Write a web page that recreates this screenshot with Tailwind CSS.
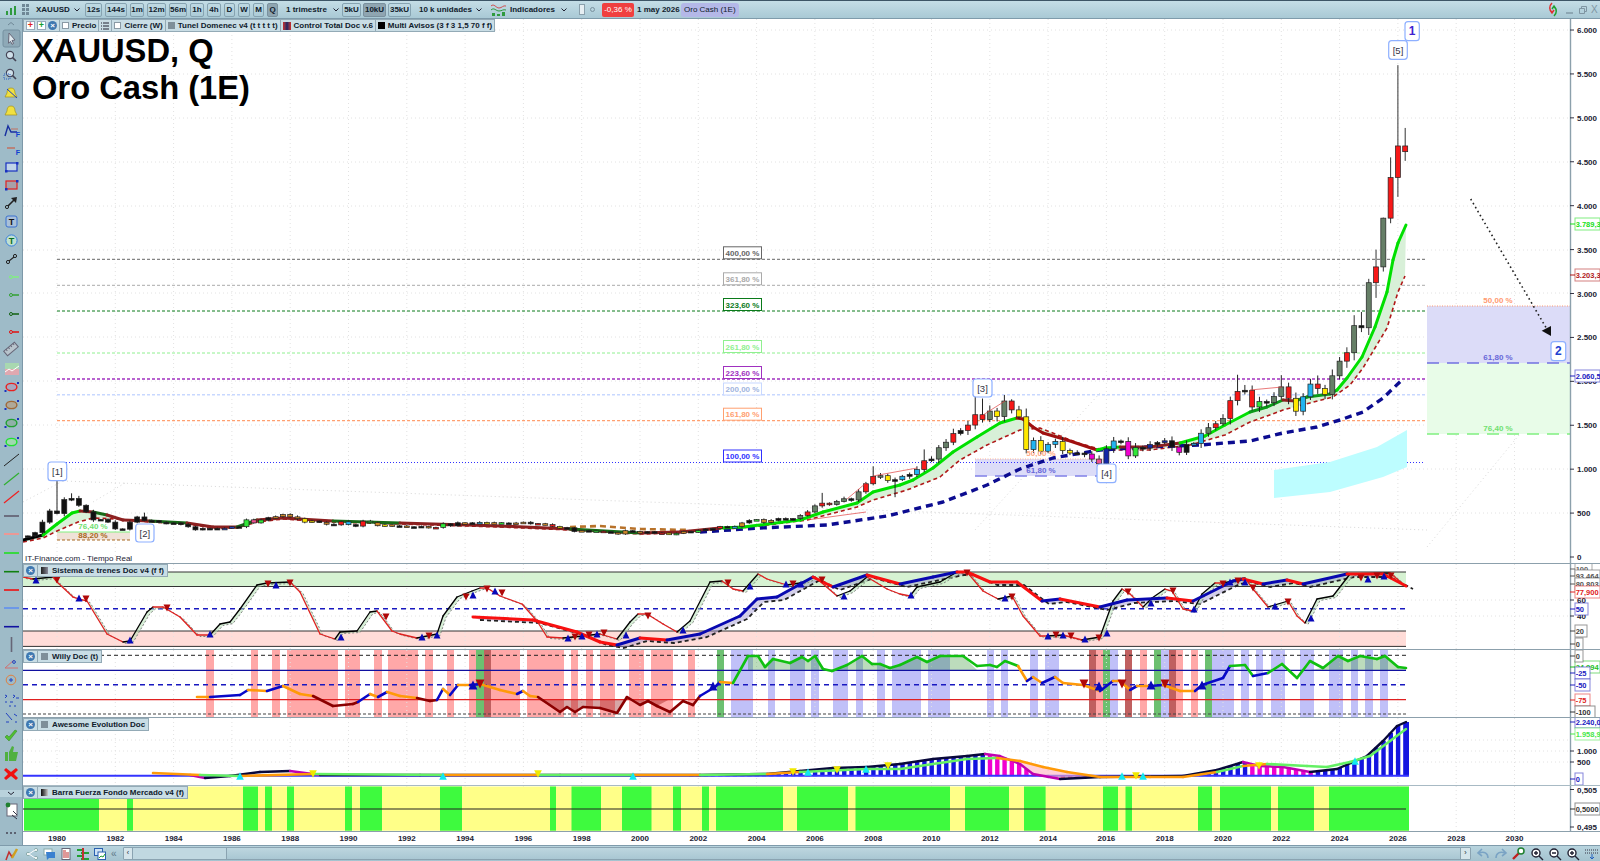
<!doctype html>
<html lang="es">
<head>
<meta charset="utf-8">
<title>XAUUSD, Q</title>
<script src="https://cdn.jsdelivr.net/npm/@tailwindcss/browser@4"></script>
</head>
<body class="bg-white">
<div class="w-[1600px] h-[861px] overflow-hidden flex flex-col font-['Liberation_Sans',Arial,sans-serif] text-[#10202c] bg-white">

  <!-- top toolbar -->
  <header class="h-[19px] shrink-0 flex items-center border-t border-b border-t-[#3d5566] border-b-[#7f9bab] bg-gradient-to-b from-[#c4dde6] to-[#a9c9d5] text-[8px] font-bold whitespace-nowrap">
    <svg class="ml-[5px] w-[13px] h-[12px]" viewBox="0 0 13 12"><path d="M1 11V7h2v4zM5 11V4h2v7zM9 11V2h2v9z" fill="#2f9a3f"/></svg>
    <svg class="ml-[4px] w-[7px] h-[13px]" viewBox="0 0 7 13"><path d="M0 1h3v3H0zM4 1h3v3H4zM0 5h3v3H0zM4 5h3v3H4zM0 9h3v3H0zM4 9h3v3H4z" fill="#6f8796"/></svg>
    <span class="ml-[7px] w-[34px]">XAUUSD</span>
    <span class="w-[15px] flex pl-[4px]"><svg class="w-[6px] h-[4px]" viewBox="0 0 6 4"><path d="M.5.5L3 3 5.500.5" fill="none" stroke="#223"/></svg></span>
    <div class="flex gap-[3px]">
      <span class="w-[17px] h-[14px] flex items-center justify-center border border-[#86a3b1] rounded-[2px]">12s</span>
      <span class="w-[22px] h-[14px] flex items-center justify-center border border-[#86a3b1] rounded-[2px]">144s</span>
      <span class="w-[14px] h-[14px] flex items-center justify-center border border-[#86a3b1] rounded-[2px]">1m</span>
      <span class="w-[19px] h-[14px] flex items-center justify-center border border-[#86a3b1] rounded-[2px]">12m</span>
      <span class="w-[18px] h-[14px] flex items-center justify-center border border-[#86a3b1] rounded-[2px]">56m</span>
      <span class="w-[14px] h-[14px] flex items-center justify-center border border-[#86a3b1] rounded-[2px]">1h</span>
      <span class="w-[14px] h-[14px] flex items-center justify-center border border-[#86a3b1] rounded-[2px]">4h</span>
      <span class="w-[11px] h-[14px] flex items-center justify-center border border-[#86a3b1] rounded-[2px]">D</span>
      <span class="w-[12px] h-[14px] flex items-center justify-center border border-[#86a3b1] rounded-[2px]">W</span>
      <span class="w-[11px] h-[14px] flex items-center justify-center border border-[#86a3b1] rounded-[2px]">M</span>
      <span class="w-[11px] h-[14px] flex items-center justify-center border border-[#7a919e] rounded-[2px] bg-[#8fa5b1]">Q</span>
    </div>
    <span class="ml-[8px] w-[47px]">1 trimestre</span>
    <span class="w-[9px] flex"><svg class="w-[6px] h-[4px]" viewBox="0 0 6 4"><path d="M.5.5L3 3 5.500.5" fill="none" stroke="#223"/></svg></span>
    <div class="flex gap-[2px]">
      <span class="w-[19px] h-[14px] flex items-center justify-center border border-[#86a3b1] rounded-[2px]">5kU</span>
      <span class="w-[23px] h-[14px] flex items-center justify-center border border-[#7a919e] rounded-[2px] bg-[#8fa5b1]">10kU</span>
      <span class="w-[23px] h-[14px] flex items-center justify-center border border-[#86a3b1] rounded-[2px]">35kU</span>
    </div>
    <span class="ml-[8px] w-[54px]">10 k unidades</span>
    <span class="w-[17px] flex pl-[3px]"><svg class="w-[6px] h-[4px]" viewBox="0 0 6 4"><path d="M.5.5L3 3 5.500.5" fill="none" stroke="#223"/></svg></span>
    <svg class="w-[17px] h-[15px]" viewBox="0 0 17 15"><path d="M1 4c3-3 5 2 8 2s4-3 7-2" fill="none" stroke="#d05050"/><path d="M1 8c3-3 5 1 8 1s4-2 7-1" fill="none" stroke="#2f9a3f"/><path d="M2 14v-3h3v3zM7 14v-2h3v2zM12 14v-4h3v4z" fill="#2f9a3f"/></svg>
    <span class="ml-[3px] w-[48px]">Indicadores</span>
    <span class="w-[11px] flex pl-[3px]"><svg class="w-[6px] h-[4px]" viewBox="0 0 6 4"><path d="M.5.5L3 3 5.500.5" fill="none" stroke="#223"/></svg></span>
    <span class="ml-[10px] w-[6px] h-[11px] bg-[#e6eef2] border border-[#8aa0ac]"></span>
    <span class="ml-[5px] w-[5px] h-[5px] rounded-full border border-[#7a919e]"></span>
    <span class="ml-[7px] w-[32px] h-[14px] flex items-center justify-center bg-[#f04040] text-white rounded-[2px] font-normal">-0,36 %</span>
    <span class="ml-[3px] w-[43px]">1 may 2026</span>
    <span class="ml-[1px] px-[3px] h-[14px] flex items-center bg-[#b4b8e8] rounded-[3px] font-normal">Oro Cash (1E)</span>
    <span class="flex-1"></span>
    <svg class="w-[12px] h-[15px]" viewBox="0 0 12 15"><path d="M5 1C2 4 2 8 5 10M3 8l2 3 2-3" fill="none" stroke="#e03030" stroke-width="1.5"/><path d="M7 14c3-3 3-7 0-9M5 7l2-3 2 3" fill="none" stroke="#20a030" stroke-width="1.5"/></svg>
    <svg class="ml-[7px] w-[8px] h-[8px]" viewBox="0 0 8 8"><path d="M0 7h7" stroke="#7f95a2" stroke-width="1.4"/></svg>
    <svg class="ml-[5px] w-[8px] h-[8px]" viewBox="0 0 8 8"><path d="M.5 2.500h5v5h-5zM2.500 2.500V.5h5v5h-2" fill="none" stroke="#7f95a2"/></svg>
    <span class="ml-[4px] w-[9px] text-[#7f95a2] text-[10px] font-normal leading-none">X</span>
  </header>

  <!-- body -->
  <div class="flex-1 flex min-h-0">
    <aside class="w-[23px] shrink-0 bg-[#9ebbc8] border-r border-[#7d98a8]">
      <svg class="w-[22px] h-[826px] block" viewBox="0 19 22 826" id="tools"></svg>
    </aside>

    <main class="flex-1 flex flex-col min-w-0">
      <section class="relative h-[545px] shrink-0 border-b border-[#8ca0ac]">
        <svg class="block w-[1577px] h-[544px]" viewBox="23 19 1577 544" id="mainChart"></svg>
        <div class="absolute left-0 top-0 flex items-center h-[13px] bg-[#c9dde5] border border-[#93aab6] text-[8px] font-bold whitespace-nowrap">
          <span class="flex items-center gap-[2px] px-[2px]">
            <span class="w-[9px] h-[9px] bg-white border border-[#99aabb] flex items-center justify-center text-[#e02020] text-[9px] leading-none">+</span>
            <span class="w-[9px] h-[9px] bg-white border border-[#99aabb] flex items-center justify-center text-[#18a030] text-[9px] leading-none">+</span>
            <span class="w-[9px] h-[9px] rounded-full bg-[#3f78b0] flex items-center justify-center text-white text-[8px] leading-none">×</span>
          </span>
          <span class="flex items-center h-full border-l border-[#93aab6] px-[2px] gap-[3px]"><i class="w-[7px] h-[7px] border border-[#8a9aa5] bg-white"></i>Precio</span>
          <span class="flex items-center h-full border-l border-[#93aab6] px-[2px]"><svg class="w-[8px] h-[8px]" viewBox="0 0 8 8"><path d="M0 1h1M2 1h6M0 4h1M2 4h6M0 7h1M2 7h6" stroke="#223" fill="none"/></svg></span>
          <span class="flex items-center h-full border-l border-[#93aab6] px-[2px] gap-[3px]"><i class="w-[7px] h-[7px] border border-[#8a9aa5] bg-white"></i>Cierre (W)</span>
          <span class="flex items-center h-full border-l border-[#93aab6] px-[2px] gap-[3px]"><i class="w-[7px] h-[7px] bg-[#7f8f99]"></i>Tunel Domenec v4 (t t t t t)</span>
          <span class="flex items-center h-full border-l border-[#93aab6] px-[2px] gap-[3px]"><i class="w-[8px] h-[8px] bg-gradient-to-r from-[#d02020] via-[#202060] to-[#d02020]"></i>Control Total Doc v.6</span>
          <span class="flex items-center h-full border-l border-[#93aab6] px-[2px] gap-[3px]"><i class="w-[7px] h-[7px] bg-black"></i>Multi Avisos (3 f 3 1,5 70 f f)</span>
        </div>
        <h1 class="absolute left-[9px] top-[13px] text-[32.7px] leading-[37px] font-bold text-black">XAUUSD, Q<br>Oro Cash (1E)</h1>
        <div class="absolute left-[2px] bottom-0 text-[8px] leading-[9px] text-[#223]">IT-Finance.com - Tiempo Real</div>
      </section>

      <section class="relative h-[86px] shrink-0 border-b border-[#8ca0ac]">
        <svg class="block w-[1577px] h-[85px]" viewBox="23 565 1577 85" id="pTrenes"></svg>
        <div class="absolute left-0 top-0 h-[13px] flex items-center bg-[#c9dde5] border border-[#93aab6] text-[8px] font-bold whitespace-nowrap">
          <span class="w-[9px] h-[9px] mx-[2px] rounded-full bg-[#3f78b0] flex items-center justify-center text-white text-[8px] leading-none">×</span>
          <span class="flex items-center h-full border-l border-[#93aab6] px-[3px] gap-[4px]"><i class="w-[7px] h-[7px] bg-gradient-to-r from-[#222222] to-[#888899]"></i>Sistema de trenes Doc v4 (f f)</span>
        </div>
      </section>

      <section class="relative h-[68px] shrink-0 border-b border-[#8ca0ac]">
        <svg class="block w-[1577px] h-[67px]" viewBox="23 651 1577 67" id="pWilly"></svg>
        <div class="absolute left-0 top-0 h-[13px] flex items-center bg-[#c9dde5] border border-[#93aab6] text-[8px] font-bold whitespace-nowrap">
          <span class="w-[9px] h-[9px] mx-[2px] rounded-full bg-[#3f78b0] flex items-center justify-center text-white text-[8px] leading-none">×</span>
          <span class="flex items-center h-full border-l border-[#93aab6] px-[3px] gap-[4px]"><i class="w-[7px] h-[7px] bg-[#7f8f99]"></i>Willy Doc (t)</span>
        </div>
      </section>

      <section class="relative h-[68px] shrink-0 border-b border-[#a8bac4]">
        <svg class="block w-[1577px] h-[67px]" viewBox="23 719 1577 67" id="pAwesome"></svg>
        <div class="absolute left-0 top-0 h-[13px] flex items-center bg-[#c9dde5] border border-[#93aab6] text-[8px] font-bold whitespace-nowrap">
          <span class="w-[9px] h-[9px] mx-[2px] rounded-full bg-[#3f78b0] flex items-center justify-center text-white text-[8px] leading-none">×</span>
          <span class="flex items-center h-full border-l border-[#93aab6] px-[3px] gap-[4px]"><i class="w-[7px] h-[7px] bg-[#7f8f99]"></i>Awesome Evolution Doc</span>
        </div>
      </section>

      <section class="relative h-[46px] shrink-0 border-b border-[#8ca0ac]">
        <svg class="block w-[1577px] h-[45px]" viewBox="23 787 1577 45" id="pBarra"></svg>
        <div class="absolute left-0 top-0 h-[13px] flex items-center bg-[#c9dde5] border border-[#93aab6] text-[8px] font-bold whitespace-nowrap">
          <span class="w-[9px] h-[9px] mx-[2px] rounded-full bg-[#3f78b0] flex items-center justify-center text-white text-[8px] leading-none">×</span>
          <span class="flex items-center h-full border-l border-[#93aab6] px-[3px] gap-[4px]"><i class="w-[7px] h-[7px] bg-gradient-to-r from-[#111111] to-[#cccccc]"></i>Barra Fuerza Fondo Mercado v4 (f)</span>
        </div>
      </section>

      <svg class="block w-[1577px] h-[12px] shrink-0" viewBox="23 833 1577 12" id="years"></svg>
    </main>
  </div>

  <!-- bottom toolbar -->
  <footer class="h-[16px] shrink-0 flex items-center border-t border-[#7f9bab] bg-gradient-to-b from-[#b8d4de] to-[#a4c3cf]">
    <svg class="ml-[5px] w-[14px] h-[14px]" viewBox="0 0 14 14"><path d="M1 13l3-8 3 5 2-3" fill="none" stroke="#c03030" stroke-width="1.5"/><path d="M7 11L12 2" stroke="#d0a020" stroke-width="2.500"/></svg>
    <div class="ml-[7px] flex items-center gap-[5px]">
      <svg class="w-[12px] h-[12px]" viewBox="0 0 12 12"><g fill="#fff" stroke="#88aaaa"><circle cx="2" cy="6" r="1.6"/><circle cx="10" cy="2" r="1.6"/><circle cx="10" cy="10" r="1.6"/></g><path d="M3 6l6-4M3 6l6 4" stroke="#fff"/></svg>
      <svg class="w-[12px] h-[12px]" viewBox="0 0 12 12"><rect x="1" y="1" width="8" height="6" fill="#fff" stroke="#88aaaa"/><path d="M3 4h9v6H6l-2 2z" fill="#3a80d0"/></svg>
      <svg class="w-[12px] h-[12px]" viewBox="0 0 12 12"><rect x="2" y="0.5" width="8" height="11" fill="#fff" stroke="#666677"/><path d="M3 3h3M3 5h6M3 7h6M3 9h6" stroke="#c03030"/></svg>
      <svg class="w-[12px] h-[12px]" viewBox="0 0 12 12"><path d="M0 2h6M4 5h8M0 8h6M4 11h8" stroke="#20a030" stroke-width="2"/><path d="M6 0v12" stroke="#c03030" stroke-width="2"/></svg>
      <svg class="w-[12px] h-[12px]" viewBox="0 0 12 12"><rect x="0.5" y="0.5" width="8" height="7" fill="#cfe3f5" stroke="#2a60b0"/><rect x="4" y="4" width="7.5" height="7.5" fill="#fff" stroke="#2a60b0"/><path d="M5 10l2-2 2 1 2-3" stroke="#20a030" fill="none"/></svg>
    </div>
    <span class="ml-[5px] w-[10px] text-[10px] text-[#5f7887] leading-none">«</span>
    <div class="ml-[2px] w-[1351px] h-[13px] flex border border-[#8aa3b1] rounded-[1px] bg-[#b4d0db]">
      <span class="w-[9px] flex items-center justify-center text-[7px] bg-[#d5e5eb] border-r border-[#8aa3b1]">‹</span>
      <span class="w-[94px] bg-[#c0d8e1] border-r border-[#8aa3b1]"></span>
      <span class="flex-1 bg-gradient-to-b from-[#bdd6df] to-[#a9c7d3]"></span>
      <span class="w-[10px] flex items-center justify-center text-[7px] bg-[#d5e5eb] border-l border-[#8aa3b1]">›</span>
    </div>
    <div class="ml-[5px] flex items-center gap-[4px]">
      <svg class="w-[14px] h-[13px]" viewBox="0 0 14 13"><path d="M12 11c0-5-4-7-9-5M6 2L2 6l4 3" fill="none" stroke="#7aa3c4" stroke-width="1.6"/></svg>
      <svg class="w-[14px] h-[13px]" viewBox="0 0 14 13"><path d="M2 11c0-5 4-7 9-5M8 2l4 4-4 3" fill="none" stroke="#7aa3c4" stroke-width="1.6"/></svg>
      <svg class="w-[14px] h-[14px]" viewBox="0 0 14 14"><path d="M1 12l6-6" stroke="#c02020" stroke-width="2.400"/><circle cx="9" cy="4" r="3" fill="#fff" stroke="#208030" stroke-width="1.5"/></svg>
      <svg class="w-[14px] h-[14px]" viewBox="0 0 14 14"><circle cx="6" cy="6" r="4" fill="#fff" stroke="#222233" stroke-width="1.4"/><path d="M9 9l4 4M6 4v4M4 6h4" stroke="#222233" stroke-width="1.4"/></svg>
      <svg class="w-[14px] h-[14px]" viewBox="0 0 14 14"><circle cx="6" cy="6" r="4" fill="#fff" stroke="#222233" stroke-width="1.4"/><path d="M9 9l4 4M4 6h4" stroke="#222233" stroke-width="1.4"/></svg>
      <svg class="w-[14px] h-[14px]" viewBox="0 0 14 14"><circle cx="6" cy="6" r="4" fill="#fff" stroke="#222233" stroke-width="1.4"/><path d="M9 9l4 4M6 4v4M4 6h4" stroke="#222233" stroke-width="1.4"/></svg>
      <svg class="w-[16px] h-[13px]" viewBox="0 0 16 13"><path d="M1 3h14M1 6h14" stroke="#333344" stroke-dasharray="1 1" fill="none"/><path d="M8 7v5M6 10l2 2 2-2" stroke="#2060c0" fill="none"/></svg>
    </div>
  </footer>
</div>

<script>
(function(){
var FONT='font-family="Liberation Sans,Arial,sans-serif"';
function X(y){return 57+(y-1980)*29.15}
function Y(p){return 557-p*0.08783}
function pts(a){return a.map(function(p){return p[0]+','+p[1]}).join(' ')}
function line(a,c,w,extra){return '<polyline points="'+pts(a)+'" fill="none" stroke="'+c+'" stroke-width="'+w+'" stroke-linejoin="round" '+(extra||'')+'/>'}
function seg(x1,y1,x2,y2,c,w,extra){return '<line x1="'+x1+'" y1="'+y1+'" x2="'+x2+'" y2="'+y2+'" stroke="'+c+'" stroke-width="'+(w||1)+'" '+(extra||'')+'/>'}
function rect(x,y,w,h,c,extra){return '<rect x="'+x+'" y="'+y+'" width="'+w+'" height="'+h+'" fill="'+c+'" '+(extra||'')+'/>'}
function text(x,y,s,c,size,weight,anchor){return '<text x="'+x+'" y="'+y+'" fill="'+c+'" font-size="'+size+'" '+FONT+' font-weight="'+(weight||'normal')+'" text-anchor="'+(anchor||'start')+'">'+s+'</text>'}
function tri(x,y,c,up,s){s=s||4;return up?'<polygon points="'+(x-s)+','+(y+s)+' '+(x+s)+','+(y+s)+' '+x+','+(y-s)+'" fill="'+c+'"/>':'<polygon points="'+(x-s)+','+(y-s)+' '+(x+s)+','+(y-s)+' '+x+','+(y+s)+'" fill="'+c+'"/>'}
function grid(top,bottom){var s='';for(var y=1980;y<=2030;y+=2)s+=seg(X(y),top,X(y),bottom,'#e2e2e2',1,'stroke-dasharray="1 3"');return s}
function hgrid(ys){return ys.map(function(y){return seg(23,y,1570,y,'#e2e2e2',1,'stroke-dasharray="1 3"')}).join('')}
function axis(top,bottom){return rect(1570,top,30,bottom-top,'#fff')+seg(1570.5,top,1570.5,bottom,'#8ca0ac',1.4)}
function tick(y,s,c){return seg(1570,y,1574,y,c||'#334',1)+text(1577,y+3,s,c||'#223',8,'bold')}
function box(y,s,c,w){w=w||25;return seg(1570,y,1575,y,c,1)+rect(1575,y-6,w,12,'#fff','stroke="'+c+'" stroke-opacity=".55"')+text(1575.7,y+3,s,c,7.5,'bold')}
function lab(x0,x1,y0,y1,s,c,col){return rect(x0,y0,x1-x0,y1-y0,'#fff','rx="3" stroke="#8eb0ff" stroke-width="1.2"')+text((x0+x1)/2,(y0+y1)/2+3.5,s,col||'#334',col?12:9.5,col?'bold':'normal','middle')}

/* ---------- candles ---------- */
var closes=[240,277,397,524,494,653,666,589,513,422,428,397,320,317,397,456,415,413,395,381,388,373,344,309,326,317,326,327,344,345,423,388,421,447,459,484,457,436,397,410,395,373,366,401,368,352,408,391,356,367,355,353,344,343,349,332,337,378,355,390,389,385,394,383,391,387,384,387,396,382,379,369,348,334,332,290,301,296,294,288,279,262,299,290,276,288,273,272,258,270,292,279,302,318,323,347,336,346,388,416,426,394,416,438,428,437,473,513,582,613,599,632,663,650,742,834,917,926,871,880,919,939,995,1096,1115,1244,1307,1405,1439,1502,1620,1564,1662,1598,1776,1675,1596,1224,1326,1204,1283,1315,1211,1184,1183,1172,1115,1061,1232,1321,1315,1151,1247,1241,1280,1302,1323,1252,1192,1281,1292,1409,1472,1517,1577,1780,1886,1898,1708,1770,1757,1828,1937,1807,1660,1824,1969,1919,1849,2063,2230,2326,2634,2610,3123,3303,3858,4320,4680,4615];
var hi={'1980.00':875,'1980.50':725,'1983.00':505,'1981.00':600,'2006.25':730,'2008.00':1033,'2009.75':1225,'2011.50':1920,'2011.75':1804,'2012.75':1796,'2020.50':2075,'2022.00':2070,'2023.25':2067,'2023.75':2135,'2024.75':2790,'2025.00':3167,'2025.25':3500,'2025.50':3864,'2025.75':4550,'2026.00':5600,'2026.25':4885};
var lo={'2008.75':681,'2026.00':4100,'2026.25':4510,'2025.75':3800,'2025.25':2950,'2025.50':3250,'2013.25':1180,'2015.75':1046};
var cols=['kkkk','kkkk','kkkk','kkkk','kkkk','kkkk','kkkb','bklp','lkoo','ooyy','kokr','ckrl','oyok','okko','rlkk','okcy','olko','okro','rykk','oklr','kook','okkr','ylok','lkkr','kcok','look','kkgr','grrg','gkgr','rgyk','ckcr','kggr','krrr','gygr','yycy','ccyy','kkmp','nckm','lknk','nkmk','ccgr','grrk','rlkg','gryc','cryg','grgk','grgr','rr'].join('');
var CM={k:'#111',g:'#667f67',r:'#f81818',y:'#ffe800',c:'#22b4f0',m:'#f000d0',n:'#1428a8',l:'#30e838',o:'#d08a28',b:'#2840c8',p:'#f05090'};
function candles(){var s='';var prev=closes[0]*0.95;
 for(var i=0;i<closes.length;i++){var yr=1979+i*0.25,x=X(yr),o=prev,c=closes[i];if(i==closes.length-1){o=4680;c=4615}
  var top=Math.max(o,c),bot=Math.min(o,c),key=yr.toFixed(2);
  var w=Math.abs(o-c)*0.12+top*0.012*(1+((i*7)%5)*0.4);
  var h=hi[key]||top+w, l=lo[key]||bot-Math.abs(o-c)*0.1-bot*0.012*(1+((i*3)%4)*0.5);
  s+=seg(x,Y(h),x,Y(l),i>180?'#333':'#222',1);
  var by=Y(top),bh=Math.max(Y(bot)-by,1.6);
  s+=rect(x-2.5,by,5,bh,CM[cols[i]]||'#111','stroke="#222" stroke-width=".7"');
  prev=c}
 return s}

var ma=[[23,540],[43,535],[57,524],[72,513],[80,511],[93,512],[107,515],[123,520],[150,521],[187,523],[213,527],[237,527],[257,520],[283,518],[333,521],[400,523],[500,526],[570,529],[640,533],[680,532],[720,528],[743,527],[800,520],[823,512],[857,503],[873,492],[900,485],[913,480],[933,468],[953,452],[977,437],[1000,423],[1017,418],[1023,419],[1033,427],[1043,433],[1067,440],[1097,450],[1105,448],[1120,447],[1150,447],[1180,443],[1205,436],[1225,425],[1250,412],[1267,407],[1283,400],[1295,401],[1307,397],[1330,394],[1337,390],[1347,378],[1362,357],[1375,327],[1387,292],[1393,260],[1398,243],[1406,225]];
var rd=[[23,542],[43,538],[57,531],[78,522],[93,518],[117,519],[150,522],[187,524],[213,528],[237,528],[257,522],[283,519],[333,522],[400,524],[500,527],[570,530],[640,534],[680,533],[720,529],[743,528],[807,520],[857,507],[873,500],[907,490],[940,477],[960,460],[987,445],[1020,430],[1040,428],[1078,443],[1103,450],[1150,450],[1190,445],[1225,435],[1250,422],[1267,416],[1283,410],[1310,403],[1333,397],[1350,385],[1363,368],[1375,348],[1387,328],[1398,292],[1405,276]];
var navy=[[700,532],[760,528],[827,525],[887,516],[943,502],[987,485],[1020,469],[1053,458],[1100,450],[1147,447],[1200,445],[1250,441],[1283,433],[1317,427],[1340,420],[1363,412],[1383,398],[1402,380]];
function colored(a,w,fn){var s='';for(var i=1;i<a.length;i++){s+=seg(a[i-1][0],a[i-1][1],a[i][0],a[i][1],fn(a[i-1],a[i],i),w,'stroke-linecap="round"')}return s}

var m='';
m+=grid(19,563)+hgrid([30,74,118,162,206,250,293,337,381,425,469,513]);
m+=seg(23,502,63,481,'#d8d8d8',1,'stroke-dasharray="1 3"')+seg(63,481,1427,530,'#d8d8d8',1,'stroke-dasharray="1 3"')+seg(93,502,125,483,'#d8d8d8',1,'stroke-dasharray="1 3"')+seg(975,530,1100,393,'#d8d8d8',1,'stroke-dasharray="1 3"')+seg(1427,547,1570,373,'#d8d8d8',1,'stroke-dasharray="1 3"');
m+=rect(1427,306,143,57,'#dcdcf8')+rect(1427,363,143,71,'#e8fce8');
m+=seg(1427,306,1570,306,'#ff9a70',1,'stroke-dasharray="1 1.5"')+seg(1427,363,1570,363,'#7070e0',1.6,'stroke-dasharray="12 8"')+seg(1427,434,1570,434,'#80f080',1.4,'stroke-dasharray="12 8"');
m+=text(1498,303,'50,00 %','#ff9a70',8,'bold','middle')+text(1498,360,'61,80 %','#6868d8',8,'bold','middle')+text(1498,431,'76,40 %','#70e070',8,'bold','middle');
m+=rect(975,459,130,17,'#dcdcf8')+seg(975,459,1105,459,'#ffb090',1,'stroke-dasharray="1 1.5"')+seg(975,476,1105,476,'#8080e8',1.6,'stroke-dasharray="12 8"');
m+=rect(57,532,73,8,'#f0e2d8')+seg(57,532,130,532,'#80f080',1)+seg(57,540,130,540,'#a86820',1,'stroke-dasharray="3 2"');
[[259.3,'#666',1,'400,00 %','3 2'],[285.3,'#aaa',1,'361,80 %','3 2'],[311,'#0a7a1a',1,'323,60 %','3 2'],[353,'#90f090',1,'261,80 %','3 2'],[379,'#a030c0',1.5,'223,60 %','3 2'],[394.7,'#c8d8ff',1.5,'200,00 %','3 2'],[420.7,'#ffa070',1.2,'161,80 %','3 2'],[462.5,'#3030ff',1,'100,00 %','1 2']].forEach(function(f){
  m+=seg(57,f[0],1425,f[0],f[1],f[2],'stroke-dasharray="'+f[4]+'"');
  var ty=f[3]=='200,00 %'?383:f[0]-12.5;
  m+=rect(723.5,ty,38,12,'#fff','stroke="'+f[1]+'"')+text(742.5,ty+9,f[3],f[1]=='#c8d8ff'?'#a0b4e0':f[1],8,'bold','middle');
});
m+='<polygon points="1274,470 1330,462 1377,447 1407,430 1407,467 1383,477 1330,492 1274,498" fill="#bdfdff"/>';
m+='<polygon points="'+pts(ma.concat(rd.slice().reverse()))+'" fill="#d8f0d8"/>';
m+=line(rd,'#b01818',1.6,'stroke-dasharray="4 3"');
m+=line(navy,'#0c0c90',3.4,'stroke-dasharray="7 5"');
m+=line([[570,527],[600,526],[640,529],[690,530]],'#b8722a',2.6,'stroke-dasharray="6 4"');
m+=colored(ma,3,function(a,b,i){if(b[0]<45)return '#000';if(b[1]<a[1]-0.15&&(b[0]<130||b[0]>740)&&!(b[0]>1120&&b[0]<1205))return b[0]>1250&&b[0]<1340?'#0a9a18':'#00e000';if(b[0]>700&&b[0]<1130&&b[1]>a[1])return '#a01010';return (i%3==0)?'#186a18':'#8c2020'});
m+=candles();
m+=text(93,529,'76,40 %','#70e070',8,'bold','middle')+text(93,537.5,'88,20 %','#a86820',8,'bold','middle');
m+=text(1041,456,'50,00 %','#ffa880',8,'bold','middle')+text(1041,473,'61,80 %','#6868d8',8,'bold','middle');
m+=line([[807,520],[866,512]],'#e04040',.7)+line([[847,499],[866,483]],'#e04040',.7)+line([[873,476],[917,468]],'#e04040',.7)+line([[983,415],[1005,401]],'#e04040',.7)+line([[1250,390],[1282,387]],'#e04040',.7);
m+=seg(1470.7,199,1548,331,'#222',1.6,'stroke-dasharray="1.6 3"')+'<polygon points="1541.7,330.7 1551,326 1551,336" fill="#111"/>';
m+=lab(48,66.7,462,480.7,'[1]')+lab(135.7,154,524,542,'[2]')+lab(973,992,379,397,'[3]')+lab(1097,1116,464,482.7,'[4]')+lab(1388.7,1407.3,40.7,59.3,'[5]');
m+=lab(1405,1419.3,21.7,40.7,'1',0,'#4020d0')+lab(1551,1565.7,341.7,360.7,'2',0,'#2040d0');
m+=axis(19,564);
[6000,5500,5000,4500,4000,3500,3000,2500,2000,1500,1000].forEach(function(p){m+=tick(Y(p),String(p).replace(/(\d)(\d{3})$/,'$1.$2'))});
m+=tick(Y(500),'500')+tick(Y(0),'0');
m+=box(224,'3.789,3','#18e018')+box(275,'3.203,3','#b01818')+box(376,'2.060,5','#2020c0');
document.getElementById('mainChart').innerHTML=m;

/* ---------- Sistema de trenes ---------- */
var thin=[[23,578],[33,580],[53,578],[57,583],[73,598],[87,602],[107,635],[123,643],[130,642],[147,613],[153,608],[163,608],[180,618],[197,636],[210,636],[220,625],[230,623],[240,610],[257,586],[267,584],[290,583],[300,593],[320,635],[335,640],[340,633],[357,632],[370,613],[377,612],[392,632],[400,635],[417,639],[437,635],[443,617],[457,598],[472,592],[480,589],[487,589],[500,597],[522,605],[537,622],[547,638],[563,639],[573,638],[600,635],[617,640],[630,623],[638,615],[647,615],[663,625],[677,633],[690,622],[710,583],[722,582],[733,590],[743,592],[758,575],[767,580],[787,586],[800,584],[815,578],[837,597],[850,592],[867,578],[887,590],[900,595],[910,597],[917,588],[940,583],[957,573],[967,573],[983,592],[998,600],[1012,597],[1023,617],[1040,637],[1047,637],[1063,636],[1082,641],[1100,638],[1113,602],[1122,590],[1130,595],[1143,608],[1152,599],[1165,590],[1172,592],[1183,610],[1193,612],[1202,595],[1215,584],[1223,584],[1233,582],[1245,579],[1253,590],[1268,608],[1288,602],[1297,617],[1305,624],[1317,600],[1333,597],[1350,575],[1390,574],[1403,585]];
var thick=[[473,618],[533,621],[577,633],[600,643],[617,646],[640,639],[667,641],[700,635],[740,617],[757,600],[777,598],[813,578],[833,588],[867,576],[900,585],[933,578],[957,573],[967,573],[990,583],[1017,583],[1042,602],[1060,600],[1100,608],[1127,601],[1167,599],[1193,602],[1233,582],[1243,580],[1263,585],[1287,581],[1303,585],[1347,575],[1383,575],[1406,587]];
var p='';
p+=rect(23,573,1383,14.5,'#d6f2d2')+rect(23,632,1383,15.5,'#ffdcd8');
p+=grid(565,650)+hgrid([601,617]);
p+=seg(23,573,1406,573,'#333',1)+seg(23,587.5,1406,587.5,'#333',1)+seg(23,632,1406,632,'#333',1)+seg(23,647.4,1406,647.4,'#333',1)+seg(23,609.7,1406,609.7,'#1818c0',1.4,'stroke-dasharray="5 4"');
var d=thick.map(function(a){return [a[0]+7,a[1]+3]});
p+='<polygon points="'+pts(thick.concat(d.slice().reverse()))+'" fill="#9088c8" fill-opacity=".4"/>';
p+=line(d,'#222',1.8,'stroke-dasharray="4 3"');
var ds=thin.map(function(a){return [a[0]+3,a[1]+1.5]});
p+='<polygon points="'+pts(thin.concat(ds.slice().reverse()))+'" fill="#b0e0b0" fill-opacity=".5"/>';
p+=line(ds,'#777',.9,'stroke-dasharray="2 2"');
p+=colored(thin,1.3,function(a,b){return b[1]<a[1]?'#000':'#e02020'});
p+=colored(thick,3,function(a,b){return b[1]<a[1]-1?'#0808b0':'#f81010'});
[[36,581,1],[57,581,0],[79,599,1],[86,600,0],[130,641,1],[167,609,0],[210,635,1],[268,585,0],[276,586,1],[290,584,0],[341,638,1],[386,618,0],[422,638,1],[429,637,0],[437,636,1],[466,598,0],[473,596,1],[487,590,0],[495,592,1],[502,594,0],[568,639,1],[575,638,0],[582,637,1],[589,636,0],[597,635,1],[604,634,0],[626,636,1],[648,617,0],[683,631,1],[728,584,0],[750,587,1],[786,585,1],[793,585,0],[801,585,1],[822,581,0],[844,597,1],[911,596,1],[967,574,0],[1005,599,1],[1012,598,0],[1048,637,1],[1056,636,0],[1063,636,1],[1071,637,0],[1085,640,1],[1099,639,0],[1107,634,1],[1128,593,0],[1151,604,1],[1173,592,0],[1194,610,1],[1223,585,0],[1230,583,1],[1238,582,0],[1245,583,1],[1253,589,0],[1275,607,1],[1288,603,0],[1311,619,1],[1361,579,0],[1368,580,1],[1377,577,0],[1384,577,1],[1391,577,0]].forEach(function(t){p+=tri(t[0],t[1],t[2]?'#0808b8':'#b00808',!!t[2],3.5)});
p+=axis(565,650);
p+=tick(601,'60')+tick(617,'40')+box(570,'100','#666',17)+box(577,'93,464','#555')+box(585,'80,803','#555')+box(593,'77,900','#e02020')+box(610,'50','#2020c0',13)+box(632,'20','#444',12)+box(645,'0','#444',8);
document.getElementById('pTrenes').innerHTML=p;

/* ---------- Willy ---------- */
var bands=[['p',206,214],['p',251,258],['p',272,280],['p',287,338],['p',345,360],['p',374,382],['p',388,418],['p',425,433],['p',447,454],['p',469,476],['g',476,484],['d',484,491],['p',491,520],['p',527,564],['p',571,578],['p',586,593],['p',600,615],['p',629,644],['p',651,673],['p',688,695],['g',717,724],['b',731,753],['b',768,775],['b',790,805],['b',811,819],['b',833,848],['b',856,863],['b',877,885],['b',892,921],['b',928,950],['b',987,994],['b',1001,1008],['b',1030,1038],['b',1045,1059],['d',1089,1096],['p',1096,1103],['g',1103,1110],['b',1110,1118],['d',1125,1132],['p',1140,1147],['g',1154,1161],['b',1161,1169],['d',1169,1176],['p',1176,1183],['p',1191,1198],['g',1205,1212],['b',1212,1234],['b',1241,1249],['b',1256,1263],['b',1271,1285],['b',1300,1314],['b',1329,1343],['b',1351,1358],['b',1365,1373],['b',1380,1388]];
var BC={p:'#ffa8a8',g:'#6cc070',d:'#c06060',b:'#c0c0f8'};
var wl=[[197,698],[210,698],[240,696],[248,691],[267,692],[283,687],[300,695],[313,697],[333,707],[353,705],[358,703],[370,695],[378,698],[387,693],[400,697],[417,699],[430,702],[437,701],[443,690],[450,696],[458,686],[470,686],[480,685],[500,691],[517,695],[523,692],[530,697],[538,698],[560,713],[567,708],[575,713],[583,708],[600,709],[617,714],[627,698],[640,706],[648,702],[657,707],[670,713],[683,702],[693,706],[700,697],[715,688],[720,683],[733,684],[748,657],[758,657],[765,668],[773,660],[790,664],[802,658],[808,662],[815,657],[823,670],[832,672],[847,666],[862,657],[872,665],[880,665],[890,669],[900,666],[917,658],[927,663],[940,657],[963,657],[977,667],[990,666],[997,668],[1005,662],[1018,667],[1027,682],[1033,678],[1042,684],[1055,678],[1063,684],[1083,686],[1100,692],[1113,682],[1120,682],[1130,691],[1137,687],[1150,687],[1163,686],[1180,692],[1195,692],[1202,686],[1223,679],[1230,667],[1245,666],[1253,677],[1268,674],[1282,665],[1297,679],[1310,662],[1323,669],[1338,657],[1348,662],[1360,657],[1377,660],[1385,657],[1398,668],[1406,669]];
var w='';
bands.forEach(function(b){w+=rect(b[1],651,b[2]-b[1],67,BC[b[0]])});
w+=grid(651,718);
w+='<polygon points="748,671 '+pts(wl.slice(45,65))+' 977,671" fill="#108010" fill-opacity=".28"/>';
w+='<polygon points="1310,671 '+pts(wl.slice(94))+' 1406,671" fill="#108010" fill-opacity=".28"/>';
w+='<polygon points="538,700 '+pts(wl.slice(28,38))+' 670,700" fill="#8b0000" fill-opacity=".35"/>';
w+=seg(23,656.3,1406,656.3,'#222',1,'stroke-dasharray="4 3"')+seg(23,671.3,1406,671.3,'#1010a0',1.2)+seg(23,685.7,1406,685.7,'#1818c0',1.4,'stroke-dasharray="5 4"')+seg(23,700.7,1406,700.7,'#e02020',1.2)+seg(23,715,1406,715,'#444',1.2,'stroke-dasharray="3 2"');
w+=colored(wl,2.6,function(a,b){var my=(a[1]+b[1])/2;if(my<=672)return '#10c010';if(my>=700&&b[0]>=330&&b[0]<=700)return '#8b0000';return b[1]<a[1]?'#0808c8':'#ff9a08'});
[[473,686,1],[480,685,0],[713,687,1],[1084,685,0],[1099,687,1],[1122,685,0],[1151,686,1],[1165,685,0],[1202,686,1]].forEach(function(t){w+=tri(t[0],t[1],t[2]?'#0808b8':'#b00808',!!t[2],4.4)});
w+=axis(651,718);
w+=box(668,'24,994','#18c018')+box(657,'0','#444',8)+box(674,'-25','#2020c0',15)+box(686,'-50','#2020c0',15)+box(701,'-75','#e02020',15)+box(713,'-100','#333',20);
document.getElementById('pWilly').innerHTML=w;

/* ---------- Awesome ---------- */
var ao=[[23,776],[190,776],[205,779],[230,777],[260,773],[290,772],[320,776],[420,776],[560,776],[700,776],[767,775],[800,772],[833,769],[867,768],[900,765],[933,760],[967,757],[985,755],[1000,757],[1020,765],[1033,775],[1060,780],[1100,778],[1183,777],[1217,771],[1243,763],[1260,767],[1283,768],[1310,773],[1337,770],[1367,757],[1383,742],[1397,727],[1406,723]];
var sig=[[153,774],[200,776],[240,777],[313,775],[443,776],[538,776],[633,776],[700,776],[767,775],[800,773],[867,770],[900,770],[933,765],[967,760],[997,759],[1020,762],[1043,768],[1067,773],[1100,778],[1150,778],[1183,778],[1217,773],[1243,767],[1267,765],[1307,767],[1327,768],[1350,763],[1370,757],[1390,742],[1406,730]];
function interp(a,x){for(var i=1;i<a.length;i++){if(x<=a[i][0]){var t=(x-a[i-1][0])/(a[i][0]-a[i-1][0]);return a[i-1][1]+t*(a[i][1]-a[i-1][1])}}return a[a.length-1][1]}
var q='';
q+=grid(719,786)+hgrid([741,752,763]);
var base=776.7;
for(var yr=1979;yr<=2026.25;yr+=0.25){var x=X(yr);if(x<690)continue;var v=interp(ao,x),v0=interp(ao,x-7);
  var col=v<=v0?'#1414e0':'#f000d0';if(v>base)col='#f00050';
  q+=rect(x-2,Math.min(v,base),4.4,Math.abs(base-v)+.5,col)}
q+=rect(1404,723,5,54,'#1414e0');
q+=seg(23,base,1409,base,'#3434ff',2);
q+='<polygon points="985,755 1000,757 1020,765 1033,775 1060,780 1100,778 1043,768 1020,762 997,759" fill="#ffb0c0" fill-opacity=".6"/>';
q+=colored(ao.filter(function(a){return a[0]>=190}),2.4,function(a,b){return b[1]<=a[1]?'#08083a':'#c000b0'});
q+=colored(sig,2.6,function(a,b,i){if(b[0]>1000&&b[0]<=1235)return '#ff9a08';if(b[0]>1240&&b[0]<=1320)return i%2?'#ff9a08':'#64f064';if(b[0]>890)return '#64f064';return i%2?'#ff9a08':'#64f064'});
[[240,777,1],[313,775,0],[443,777,1],[538,775,0],[633,777,1],[793,773,0],[808,773,1],[837,771,0],[866,770,1],[888,767,0],[1122,777,1],[1136,777,0],[1143,777,1],[1259,767,0],[1355,762,1]].forEach(function(t){q+=tri(t[0],t[1],t[2]?'#10e8f0':'#f0e800',!!t[2],3.8)});
q+=axis(719,786);
q+=tick(752,'1.000')+tick(763,'500')+box(723,'2.240,0','#2020c0')+box(735,'1.958,9','#48e848')+box(780,'0','#2020c0',8);
document.getElementById('pAwesome').innerHTML=q;

/* ---------- Barra ---------- */
var gr=[[23,98],[127,133],[243,258],[265,272],[287,294],[345,352],[360,382],[440,462],[550,556],[571.5,601],[622,651.5],[673,681],[702,709],[716,783],[797,848],[855.5,950],[965,1009],[1024,1045.6],[1103,1118],[1125.5,1132],[1198,1212],[1220,1271],[1278,1314],[1329,1409]];
var r=grid(787,832)+rect(24,787.5,1385,44.2,'#ffff88');
gr.forEach(function(g){r+=rect(g[0]+(g[0]==23?1:0),787.5,g[1]-g[0],44.2,'#3efa3e')});
r+=seg(23,810,1406,810,'#222',1.2);
r+=axis(787,832)+tick(790.5,'0,505')+box(810,'0,5000','#333')+tick(828,'0,495');
document.getElementById('pBarra').innerHTML=r;

/* ---------- years ---------- */
var yrs='';for(var y=1980;y<=2030;y+=2)yrs+=text(X(y),842,y,'#223',8,'bold','middle');
document.getElementById('years').innerHTML=yrs;

/* ---------- left tools ---------- */
var t='';
function dash(y,c,w){return seg(4,y,19,y,c,w||1.6)}
t+='<path d="M8 25l3-2.500 3 2.500" fill="none" stroke="#6f8796"/>';
t+=rect(3,30,17,17,'#8ea9b7','rx="2" stroke="#7590a0"')+'<path d="M9 33l6 7-3 .5 1.6 3-1.6.8-1.5-3-2 2z" fill="#dfe9ee" stroke="#667"/>';
function glass(y,extra){return '<circle cx="10" cy="'+(y-2)+'" r="3.6" fill="#cfe0ea" stroke="#445" stroke-width="1.2"/>'+seg(12.6,y+.6,16,y+4,'#445',1.6)+(extra||'')}
t+=glass(57)+glass(75,'<rect x="4" y="'+(75-1)+'" width="6" height="5" fill="none" stroke="#2a60c0" stroke-dasharray="1 1"/>');
function bell(y,crossed){return '<path d="M11 '+(y-6)+'c3 0 4 2 4 5l2 4H5l2-4c0-3 1-5 4-5z" fill="#f0e040" stroke="#a09020" stroke-width=".7"/>'+(crossed?'<path d="M7 '+(y-5)+'l10 9" stroke="#2040c0"/>':'')}
t+=bell(94,1)+bell(112);
t+='<path d="M5 136l3-10 3 6h6" fill="none" stroke="#1830a0" stroke-width="1.4"/><path d="M11 129h7" stroke="#c07060"/>'+text(18,137,'F','#1040d0',7,'bold','middle');
t+='<path d="M7 148h8" stroke="#c07060" stroke-width="1.5"/>'+text(18,155,'F','#1040d0',7,'bold','middle');
t+=rect(6,163,11,8,'#c0d4e8','stroke="#1830c0" stroke-width="1.2"')+rect(5,170,2.5,2.5,'#1830c0')+rect(16,162,2.5,2.5,'#1830c0');
t+=rect(6,181,11,8,'#a8a0a8','stroke="#e02020" stroke-width="1.2"')+rect(5,188,2.5,2.5,'#1830c0')+rect(16,180,2.5,2.5,'#1830c0');
t+='<circle cx="7" cy="207" r="1.6" fill="none" stroke="#222"/>'+seg(8,206,15,199,'#222',1.6)+'<polygon points="17,197 11,198 16,203" fill="#222"/>';
t+=rect(6,216,11,11,'#a9c0d8','stroke="#3a70d0" rx="2"')+text(11.5,225,'T','#111',9,'bold','middle');
t+='<circle cx="11.5" cy="240.5" r="5.6" fill="#bfe0d0" stroke="#3a80e0"/>'+text(11.5,244,'T','#0a7020',9,'bold','middle');
t+='<circle cx="8" cy="262" r="1.6" fill="none" stroke="#222"/><circle cx="15" cy="256" r="1.6" fill="none" stroke="#222"/>'+seg(9,261,14,257,'#222',1.1);
[[277,'#80f080'],[295,'#30a030'],[314,'#106010'],[332,'#e01010']].forEach(function(o){t+='<circle cx="11" cy="'+o[0]+'" r="1.5" fill="none" stroke="'+o[1]+'"/>'+seg(12.5,o[0],19,o[0],o[1],1.5)});
t+='<g transform="rotate(-40 11 349)"><rect x="4" y="346" width="14" height="6" fill="#b8c4cc" stroke="#667"/><path d="M7 346v2M10 346v2M13 346v2M16 346v2" stroke="#667"/></g>';
t+=rect(5,363,14,6,'#a8d8b0')+rect(5,369,14,6,'#e0a8b0')+'<path d="M5 372l4-3 3 2 7-5" fill="none" stroke="#fff"/>';
[[387,'#e82020','#a8a8c0'],[405,'#a06838','#b0a898'],[423,'#20a030','#90b0a8'],[442,'#20e030','#a0d8b0']].forEach(function(o){t+='<ellipse cx="11.5" cy="'+o[0]+'" rx="5.4" ry="3.6" fill="'+o[2]+'" stroke="'+o[1]+'" stroke-width="1.4"/>'+rect(4.5,o[0]+3,2,2,'#1830c0')+rect(17,o[0]-5,2,2,'#1830c0')});
t+=seg(4,466,19,454,'#222',1)+seg(4,485,19,473,'#30b030',1.2)+seg(4,503,19,491,'#f02020',1.2);
t+=dash(516,'#667',1.8)+dash(534,'#ff9088')+dash(553,'#20e020')+dash(571.7,'#108010')+dash(590,'#f01010')+dash(608,'#6090f0')+dash(626.7,'#1010a0')+seg(11.5,637,11.5,652,'#667',1.6);
t+='<path d="M5 668l9-8M5 668h13" fill="none" stroke="#d07070"/><circle cx="14" cy="662" r="1.4" fill="none" stroke="#2040c0"/>';
t+='<circle cx="11" cy="680" r="4.8" fill="none" stroke="#e08040"/><path d="M9 680h4M11 678v4" stroke="#2040c0"/>';
t+='<path d="M5 695l2 1-2 2M13 695l2 1-2 2M5 702h2M10 702h3M16 698h3M9 706h2M14 706h2" stroke="#2040c0" fill="none"/>';
t+='<path d="M6 713l6 7M14 714l3 2M6 722h3M15 722h2" stroke="#2040c0" fill="none"/>';
t+='<path d="M5 737l4 4 8-10-2-1-6 7-2-2z" fill="#50c030" stroke="#308020" stroke-width=".5"/>';
t+='<path d="M5 752h3v9H5zM9 752l3-6 2 1-1 5h5l-2 9H9z" fill="#50b040"/>';
t+='<path d="M6 768l5 4 5-4 2 2-4 4 4 4-2 2-5-4-5 4-2-2 4-4-4-4z" fill="#f01010"/>';
t+=rect(0,790,22,7,'#b9d2dc')+'<path d="M8 792l3 2.500 3-2.500" fill="none" stroke="#223"/>';
t+=rect(7,804,10,12,'#fff','stroke="#667"')+'<circle cx="8" cy="805" r="2.4" fill="#208030"/>'+'<path d="M12 815l5 4M13 811l4 4" stroke="#334"/>';
t+='<circle cx="7" cy="833" r="1" fill="#445"/><circle cx="11" cy="833" r="1" fill="#445"/><circle cx="15" cy="833" r="1" fill="#445"/>';
document.getElementById('tools').innerHTML=t;
})();
</script>
</body>
</html>
